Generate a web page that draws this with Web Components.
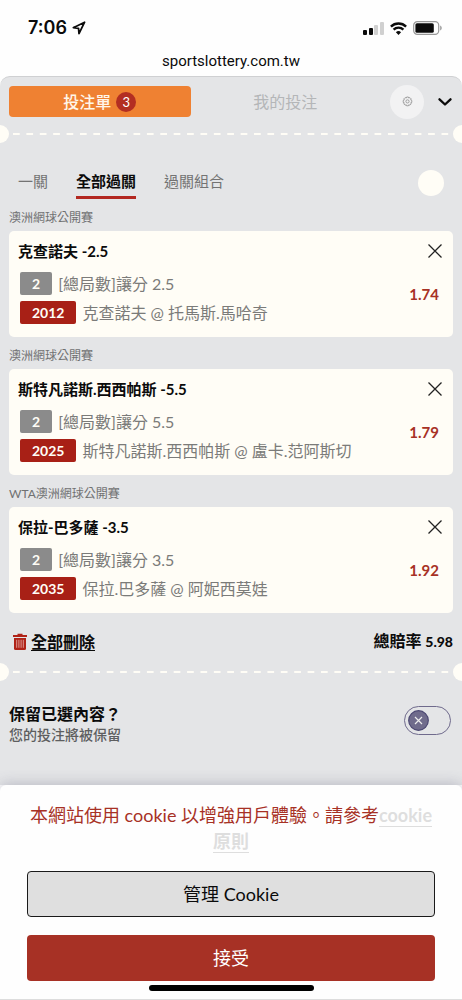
<!DOCTYPE html>
<html lang="zh-Hant-TW">
<head>
<meta charset="utf-8">
<meta name="viewport" content="width=device-width, initial-scale=1">
<title>投注單</title>
<style>
  html { background: #fefefe; }
  body {
    margin: 0;
    font-family: Lato, "Noto Sans CJK TC", sans-serif;
    font-size: 16px;
    line-height: 24px;
    color: #0b0b0b;
    --paper: #fffdf6;
    --ground: #e4e5e7;
    --red: #a82016;
    --brick: #a73125;
    --muted: #737373;
  }
</style>
</head>
<body>
<bet-app></bet-app>

<script>
const define = (name, html, setup) => {
  const template = document.createElement('template');
  template.innerHTML = html;
  customElements.define(name, class extends HTMLElement {
    constructor() {
      super();
      this.attachShadow({ mode: 'open' }).append(template.content.cloneNode(true));
    }
    connectedCallback() {
      if (setup) setup(this, this.shadowRoot);
    }
  });
};

define('phone-status', `
  <style>
    :host { display: block; color: #0b0b0b; font-family: Inter, sans-serif; }
    .row { display: flex; align-items: center; justify-content: space-between; height: 24px; padding: 16px 20px 0 28px; }
    .left, .right { display: flex; align-items: center; gap: 5px; }
    .right { gap: 6px; }
    time { font-size: 18px; font-weight: 600; }
    svg { display: block; }
    .url { padding: 9px 0 3px; text-align: center; font: 15px/24px Roboto, sans-serif; }
  </style>
  <div class="row">
    <div class="left">
      <time>7:06</time>
      <svg width="14" height="14" viewBox="0 0 15 15" fill="none" stroke="currentColor" stroke-width="1.9" stroke-linejoin="round"><path d="M13.5 1.3 1.4 7.2l5.6.6.5 5.7z"/></svg>
    </div>
    <div class="right">
      <svg width="21" height="13" viewBox="0 0 21 13"><g fill="#0b0b0b"><rect y="8" width="4" height="5" rx="1"/><rect x="6" y="6" width="4" height="7" rx="1"/></g><g fill="#d0d0d0"><rect x="11" y="3" width="4" height="10" rx="1"/><rect x="17" width="4" height="13" rx="1"/></g></svg>
      <svg width="17" height="13" viewBox="0 0 17 13" fill="none" stroke="currentColor" stroke-width="2.4"><path d="M.9 4.6a11 11 0 0 1 15.2 0"/><path d="M3.6 7.6a7 7 0 0 1 9.8 0"/><path d="M8.5 13 5.9 10.3a3.7 3.7 0 0 1 5.2 0z" fill="currentColor" stroke="none"/></svg>
      <svg width="29" height="14" viewBox="0 0 29 14"><rect x=".7" y=".7" width="25" height="12.6" rx="3.6" fill="none" stroke="#999" stroke-width="1.2"/><rect x="2.4" y="2.2" width="18.4" height="9.6" rx="1.6" fill="#0b0b0b"/><path d="M27.2 4.6c2 .8 2 4 0 4.8z" fill="#999"/></svg>
    </div>
  </div>
  <div class="url">sportslottery.com.tw</div>
`);

define('slip-header', `
  <style>
    :host { display: flex; align-items: center; padding: 8px 9px 0; height: 33px; }
    button { font: inherit; border: 0; padding: 0; background: none; cursor: pointer; }
    .tab { flex: 1; height: 31px; color: #b4b6b8; border-radius: 4px; display: flex; align-items: center; justify-content: center; gap: 5px; }
    .tab.on { margin-right: 4px; background: #ef8132; color: #fff6ea; font-weight: 500; }
    .count { width: 20px; line-height: 20px; border-radius: 50%; background: #b32e22; color: #fff; font-size: 13px; font-weight: 400; text-align: center; }
    .gear { width: 34px; height: 34px; margin: 0 13px 0 14px; border-radius: 50%; background: #f2f2f3; display: grid; place-items: center; }
    .fold { width: 16px; height: 24px; display: grid; place-items: center; }
  </style>
  <button class="tab on">投注單<span class="count">3</span></button>
  <button class="tab">我的投注</button>
  <button class="gear" aria-label="設定">
    <svg width="11" height="11" viewBox="0 0 11 11" fill="none" stroke="#8d8d8d" stroke-width=".8"><path d="M4.6 1h1.8l.4 1.1 1.1-.5 1.3 1.3-.5 1.1 1.1.5v1.9l-1.1.4.5 1.1-1.3 1.3-1.1-.5-.4 1.1H4.6l-.4-1.1-1.1.5-1.3-1.3.5-1.1-1.1-.4V4.5l1.1-.5-.5-1.1 1.3-1.3 1.1.5z" stroke-linejoin="round"/><circle cx="5.5" cy="5.4" r="1.6"/></svg>
  </button>
  <button class="fold" aria-label="收合">
    <svg width="14" height="8" viewBox="0 0 14 8" fill="none" stroke="#0b0b0b" stroke-width="2.3" stroke-linecap="round" stroke-linejoin="round"><path d="M1.5 1.3 7 6.5l5.5-5.2"/></svg>
  </button>
`);

define('ticket-tear', `
  <style>
    :host { display: flex; align-items: center; justify-content: space-between; height: 18px; overflow: hidden; }
    i { width: 9px; height: 18px; flex: none; background: var(--paper); border-radius: 0 9px 9px 0; }
    i:last-child { border-radius: 9px 0 0 9px; }
    .line { flex: 1; height: 2px; margin: 0 -2px 0 4px; background: linear-gradient(90deg, var(--paper) 52%, transparent 52%) 0 0 / calc(100% / 33) 100%; }
  </style>
  <i></i><span class="line"></span><i></i>
`);

define('parlay-tabs', `
  <style>
    :host { display: flex; align-items: center; justify-content: space-between; padding: 0 18px; font-size: 15px; }
    nav { display: flex; gap: 28px; }
    a { color: var(--muted); text-decoration: none; padding: 3px 0; border-bottom: 3px solid transparent; }
    a.on { color: #0b0b0b; font-weight: 700; border-color: #b32821; }
    button { width: 26px; height: 26px; border: 0; border-radius: 50%; background: var(--paper); padding: 0; }
  </style>
  <nav>
    <a href="#single">一關</a>
    <a href="#all" class="on">全部過關</a>
    <a href="#combo">過關組合</a>
  </nav>
  <button aria-label="說明"></button>
`);

define('bet-card', `
  <style>
    :host { display: block; padding: 0 9px; }
    .league { font-size: 12px; line-height: 16px; padding: 11px 0 5px; color: #707172; }
    article { display: grid; grid-template-columns: 1fr auto; background: var(--paper); border-radius: 5px; padding: 8px 10px 12px 9px; }
    h2 { margin: 0; font-size: 15px; line-height: 24px; font-weight: 700; }
    button { border: 0; background: none; padding: 0; width: 16px; height: 24px; justify-self: end; display: grid; place-items: center; }
    .rows { display: grid; gap: 6px; padding: 9px 0 1px 2px; }
    .row { display: flex; align-items: center; gap: 6px; color: #7b7b79; line-height: 23px; }
    .tag { background: #8b8b8b; color: var(--paper); border-radius: 2px; padding: 0 12px; font-size: 14px; font-weight: 700; line-height: 23px; }
    .tag.id { background: var(--red); }
    .odds { align-self: center; padding-right: 4px; color: var(--brick); font-size: 15px; font-weight: 700; }
  </style>
  <div class="league"><slot name="league"></slot></div>
  <article>
    <h2><slot name="pick"></slot></h2>
    <button aria-label="移除"><svg width="14" height="14" viewBox="0 0 14 14" stroke="#222" stroke-width="1.3"><path d="M.5.5l13 13M13.5.5l-13 13"/></svg></button>
    <div class="rows">
      <div class="row"><span class="tag">2</span><slot name="market"></slot></div>
      <div class="row"><span class="tag id"><slot name="number"></slot></span><slot name="match"></slot></div>
    </div>
    <div class="odds"><slot name="odds"></slot></div>
  </article>
`);

define('slip-total', `
  <style>
    :host { display: flex; justify-content: space-between; align-items: center; padding: 0 9px 0 13px; font-weight: 700; }
    button { font: inherit; color: inherit; border: 0; background: none; padding: 0; display: flex; align-items: center; gap: 4px; }
    button span { text-decoration: underline; text-decoration-thickness: 1px; text-underline-offset: 2px; }
    svg { display: block; }
    b { font-size: 14px; }
  </style>
  <button>
    <svg width="14" height="17" viewBox="0 0 14 17"><path d="M4.5 2V.8h5V2H14v2H0V2z" fill="#b02318"/><path d="M1 5h12v10.5q0 1.5-1.5 1.5h-9Q1 17 1 15.5z" fill="#b02318"/><path d="M3.7 6.8v8M5.9 6.8v8M8.1 6.8v8M10.3 6.8v8" stroke="#e6b9b4" stroke-width=".8"/></svg>
    <span>全部刪除</span>
  </button>
  <div>總賠率 <b>5.98</b></div>
`);

define('keep-switch', `
  <style>
    :host { display: block; padding: 0 11px 0 9px; }
    label { display: flex; align-items: flex-start; justify-content: space-between; }
    strong { display: block; line-height: 22px; font-weight: 700; }
    small { display: block; font-size: 14px; line-height: 20px; font-weight: 500; color: #5d5e60; }
    .switch { display: grid; align-items: center; padding-top: 3px; }
    .switch > * { grid-area: 1 / 1; }
    input { appearance: none; box-sizing: border-box; margin: 0; width: 47px; height: 29px; border: 1px solid #6f6a8c; border-radius: 15px; }
    svg { margin-left: 4px; pointer-events: none; }
  </style>
  <label>
    <span><strong>保留已選內容？</strong><small>您的投注將被保留</small></span>
    <span class="switch">
      <input type="checkbox" role="switch">
      <svg width="21" height="21" viewBox="0 0 21 21"><circle cx="10.5" cy="10.5" r="9.8" fill="#706c8c" stroke="#4d4973" stroke-width="1.2"/><path d="M7 7l7 7M14 7l-7 7" stroke="#eee" stroke-width="1.2"/></svg>
    </span>
  </label>
`);

define('cookie-sheet', `
  <style>
    :host { display: block; position: relative; background: #fefefe; border-radius: 6px 6px 0 0; padding: 17px 27px 8px; box-shadow: 0 -1px 14px rgba(80, 80, 110, .3); border-bottom: 1px solid #ddd; font-size: 18px; text-align: center; }
    p { margin: 0 0 17px; line-height: 26px; color: var(--brick); }
    a { color: #dedede; font-weight: 700; text-decoration: none; border-bottom: 1px solid #dedede; }
    button { display: block; box-sizing: border-box; width: 100%; height: 46px; margin: 0 0 18px; border-radius: 4px; font: inherit; border: 1px solid #1a1a1a; background: #dfdfdf; color: #0b0b0b; }
    button.ok { margin-bottom: 4px; border: 0; background: var(--brick); color: #fff; }
    .home { width: 165px; height: 6px; margin: 0 auto; border-radius: 3px; background: #000; }
  </style>
  <p>本網站使用 cookie 以增強用戶體驗。請參考<a href="#cookie"><span>cookie</span> <span>原則</span></a></p>
  <button>管理 Cookie</button>
  <button class="ok">接受</button>
  <div class="home"></div>
`);

define('bet-app', `
  <style>
    :host { display: flex; flex-direction: column; min-height: 100vh; }
    main { flex: 1; box-sizing: border-box; background: var(--ground); border-top: 1px solid #cfd0d2; border-radius: 10px 10px 0 0; padding-bottom: 40px; }
    ticket-tear { margin-top: 7px; }
    parlay-tabs { margin-top: 23px; }
    slip-total { margin: 16px 0 9px; }
    keep-switch { margin-top: 22px; }
  </style>
  <phone-status></phone-status>
  <main>
    <slip-header></slip-header>
    <ticket-tear></ticket-tear>
    <parlay-tabs></parlay-tabs>
    <div class="cards"></div>
    <slip-total></slip-total>
    <ticket-tear></ticket-tear>
    <keep-switch></keep-switch>
  </main>
  <cookie-sheet></cookie-sheet>
`, (host, root) => {
  const bets = [
    { league: '澳洲網球公開賽', pick: '克查諾夫 -2.5', market: '[總局數]讓分 2.5', number: '2012', match: '克查諾夫 @ 托馬斯.馬哈奇', odds: '1.74' },
    { league: '澳洲網球公開賽', pick: '斯特凡諾斯.西西帕斯 -5.5', market: '[總局數]讓分 5.5', number: '2025', match: '斯特凡諾斯.西西帕斯 @ 盧卡.范阿斯切', odds: '1.79' },
    { league: 'WTA澳洲網球公開賽', pick: '保拉-巴多薩 -3.5', market: '[總局數]讓分 3.5', number: '2035', match: '保拉.巴多薩 @ 阿妮西莫娃', odds: '1.92' }
  ];
  root.querySelector('.cards').replaceChildren(...bets.map(bet => {
    const card = document.createElement('bet-card');
    for (const [slot, text] of Object.entries(bet)) {
      const span = document.createElement('span');
      span.slot = slot;
      span.textContent = text;
      card.append(span);
    }
    return card;
  }));
});
</script>
</body>
</html>
